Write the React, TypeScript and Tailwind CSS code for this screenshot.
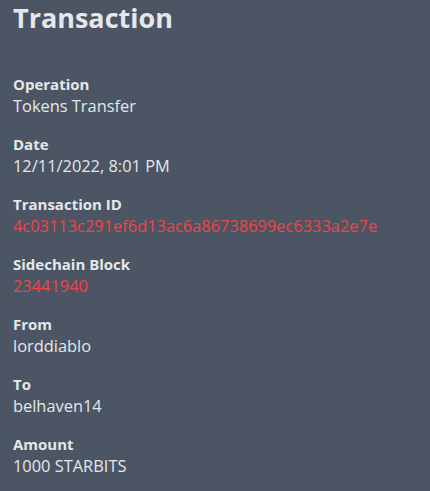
import React from "react";

const rows: { label: string; value: string; red?: boolean }[] = [
  { label: "Operation", value: "Tokens Transfer" },
  { label: "Date", value: "12/11/2022, 8:01 PM" },
  { label: "Transaction ID", value: "4c03113c291ef6d13ac6a86738699ec6333a2e7e", red: true },
  { label: "Sidechain Block", value: "23441940", red: true },
  { label: "From", value: "lorddiablo" },
  { label: "To", value: "belhaven14" },
  { label: "Amount", value: "1000 STARBITS" },
];

export default function App() {
  return (
    <div
      className="w-[430px] h-[491px] bg-[#4b5563] text-[#e5e7eb] px-[13px] overflow-hidden"
      style={{ fontFamily: '"Open Sans", sans-serif' }}
    >
      <h1 className="text-[27px] font-bold leading-[36px] text-[#e5e7eb]">Transaction</h1>
      <div className="flex flex-col gap-[16px] mt-[37px]">
        {rows.map((r) => (
          <div key={r.label} className="flex flex-col">
            <div className="text-[15px] font-bold leading-[22px]">{r.label}</div>
            <div className={`text-[16.4px] leading-[22px] ${r.red ? "text-[#ef4444]" : ""}`}>{r.value}</div>
          </div>
        ))}
      </div>
    </div>
  );
}
